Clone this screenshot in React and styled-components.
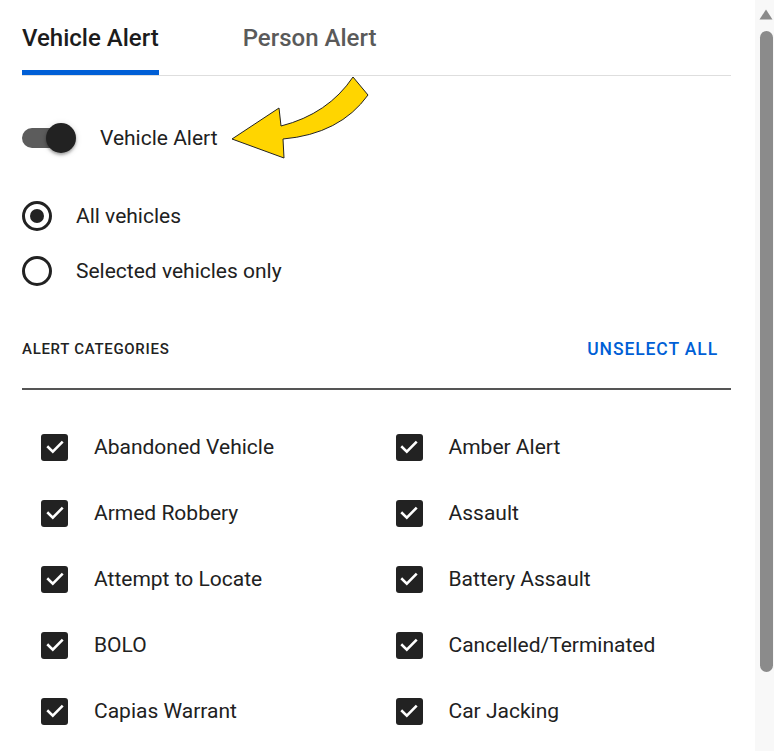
import React from "react";
import styled, { createGlobalStyle } from "styled-components";

const Global = createGlobalStyle`
  html, body { margin: 0; padding: 0; background: #fff; overflow: hidden; }
  body { font-family: Roboto, "Noto Sans", Arial, sans-serif; color: #212121; }
  * { box-sizing: border-box; }
`;

const Page = styled.div`
  display: flex;
  width: 774px;
  height: 751px;
  overflow: hidden;
`;

const Main = styled.div`
  position: relative;
  width: 755px;
  padding: 0 24px 0 22px;
`;

const TabBar = styled.div`
  display: flex;
  gap: 84px;
  border-bottom: 1px solid #dedede;
`;

const Tab = styled.div`
  height: 75px;
  padding-top: 5px;
  display: flex;
  align-items: center;
  font-size: 24px;
  font-weight: 500;
  white-space: nowrap;
  color: ${(p) => (p.$active ? "#1c1c1c" : "#5a5a5a")};
  border-bottom: 5px solid ${(p) => (p.$active ? "#005fd6" : "transparent")};
`;

const SwitchRow = styled.div`
  display: flex;
  align-items: center;
  height: 30px;
  margin-top: 47px;
`;

const Switch = styled.div`
  position: relative;
  width: 54px;
  height: 30px;
  display: flex;
  align-items: center;
`;

const Track = styled.div`
  width: 48px;
  height: 20px;
  border-radius: 10px;
  background: #5c5c5c;
`;

const Thumb = styled.div`
  position: absolute;
  right: 0;
  top: 0;
  width: 30px;
  height: 30px;
  border-radius: 50%;
  background: #222;
  box-shadow: 0 2px 3px rgba(0, 0, 0, 0.3), 0 1px 6px rgba(0, 0, 0, 0.15);
`;

const SwitchLabel = styled.span`
  margin-left: 24px;
  font-size: 21px;
`;

const RadioGroup = styled.div`
  display: flex;
  flex-direction: column;
  gap: 25px;
  margin-top: 48px;
`;

const RadioRow = styled.div`
  display: flex;
  align-items: center;
  height: 30px;
  gap: 24px;
  font-size: 21px;
`;

const RadioCircle = styled.span`
  width: 30px;
  height: 30px;
  border-radius: 50%;
  border: 3px solid #222;
  display: flex;
  align-items: center;
  justify-content: center;
  &::after {
    content: "";
    width: 14px;
    height: 14px;
    border-radius: 50%;
    background: ${(p) => (p.$checked ? "#222" : "transparent")};
  }
`;

const SectionHeader = styled.div`
  display: flex;
  justify-content: space-between;
  align-items: center;
  margin-top: 51px;
  height: 24px;
  box-sizing: content-box;
  padding-bottom: 27px;
  border-bottom: 2px solid #555;
`;

const SectionTitle = styled.span`
  font-size: 15px;
  font-weight: 500;
  letter-spacing: 0.7px;
  text-transform: uppercase;
  color: #222;
`;

const TextButton = styled.span`
  font-size: 17.5px;
  font-weight: 500;
  letter-spacing: 0.9px;
  text-transform: uppercase;
  color: #005fd6;
  margin-right: 13px;
`;

const Grid = styled.div`
  display: grid;
  grid-template-columns: 1fr 1fr;
  margin-top: 24px;
`;

const CheckItem = styled.div`
  display: flex;
  align-items: center;
  height: 66px;
  padding-left: 19px;
  gap: 26px;
  font-size: 21px;
  white-space: nowrap;
`;

const Box = styled.span`
  width: 27px;
  height: 27px;
  border-radius: 3px;
  background: #222;
  display: flex;
  align-items: center;
  justify-content: center;
  flex-shrink: 0;
`;

const ArrowSvg = styled.svg`
  position: absolute;
  left: 228px;
  top: 72px;
`;

const Scrollbar = styled.div`
  width: 19px;
  height: 751px;
  background: #f8f8f8;
  display: flex;
  flex-direction: column;
  align-items: center;
  padding-top: 9px;
  padding-left: 3px;
`;

const ThumbBar = styled.div`
  width: 13px;
  height: 641px;
  margin-top: 11px;
  border-radius: 7px;
  background: #8b8b8b;
`;

const Check = () => (
  <Box>
    <svg width="20" height="20" viewBox="0 0 20 20">
      <path d="M3.2 10.2 L7.8 14.6 L16.8 5.6" fill="none" stroke="#fff" strokeWidth="2.6" strokeLinecap="square" />
    </svg>
  </Box>
);

const categories = [
  "Abandoned Vehicle",
  "Amber Alert",
  "Armed Robbery",
  "Assault",
  "Attempt to Locate",
  "Battery Assault",
  "BOLO",
  "Cancelled/Terminated",
  "Capias Warrant",
  "Car Jacking",
];

export default function App() {
  return (
    <>
      <Global />
      <Page>
        <Main>
          <TabBar>
            <Tab $active>Vehicle Alert</Tab>
            <Tab>Person Alert</Tab>
          </TabBar>
          <SwitchRow>
            <Switch>
              <Track />
              <Thumb />
            </Switch>
            <SwitchLabel>Vehicle Alert</SwitchLabel>
          </SwitchRow>
          <RadioGroup>
            <RadioRow>
              <RadioCircle $checked />
              All vehicles
            </RadioRow>
            <RadioRow>
              <RadioCircle />
              Selected vehicles only
            </RadioRow>
          </RadioGroup>
          <SectionHeader>
            <SectionTitle>Alert Categories</SectionTitle>
            <TextButton>Unselect All</TextButton>
          </SectionHeader>
          <Grid>
            {categories.map((c) => (
              <CheckItem key={c}>
                <Check />
                {c}
              </CheckItem>
            ))}
          </Grid>
          <ArrowSvg width="146" height="92" viewBox="0 0 146 92">
            <path
              d="M4 67 L51 36 L53 54 Q100 42 125 5 L140 23 Q112 62 55 67 L56 86 Z"
              fill="#ffd500"
              stroke="#222"
              strokeWidth="1"
              strokeLinejoin="miter"
            />
          </ArrowSvg>
        </Main>
        <Scrollbar>
          <svg width="14" height="11" viewBox="0 0 14 11">
            <path d="M7 0.5 L13.5 10.5 L0.5 10.5 Z" fill="#8b8b8b" />
          </svg>
          <ThumbBar />
        </Scrollbar>
      </Page>
    </>
  );
}
